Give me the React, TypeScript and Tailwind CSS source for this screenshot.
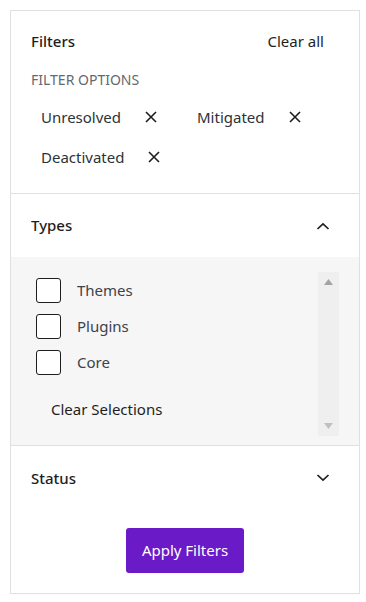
import { useState } from "react";

const font = { fontFamily: '"Noto Sans", "Open Sans", sans-serif' };

function XIcon() {
  return (
    <svg width="12" height="12" viewBox="0 0 12 12" className="shrink-0">
      <path d="M1 1L11 11M11 1L1 11" stroke="#1e1e1e" strokeWidth="1.6" fill="none" />
    </svg>
  );
}

function Chevron({ up }: { up: boolean }) {
  return (
    <svg width="14" height="8" viewBox="0 0 14 8">
      <path
        d={up ? "M1.5 7L7 1.8L12.5 7" : "M1.5 1L7 6.2L12.5 1"}
        stroke="#1e1e1e"
        strokeWidth="1.7"
        fill="none"
      />
    </svg>
  );
}

function Chip({ label, className = "" }: { label: string; className?: string }) {
  return (
    <div className={"flex items-center h-[40px] pl-[10px] " + className}>
      <span>{label}</span>
      <span className="ml-[24px]">
        <XIcon />
      </span>
    </div>
  );
}

export default function App() {
  const [types, setTypes] = useState({ Themes: false, Plugins: false, Core: false });

  return (
    <div className="min-h-screen bg-white pt-[10px] pl-[10px]" style={font}>
      <div className="w-[350px] h-[584px] border border-[#e0e0e0] flex flex-col text-[15px] text-[#2c3338]">
        {/* filters */}
        <div className="pt-[20px] pl-[20px] pr-[35px] pb-[16px] border-b border-[#e0e0e0]">
          <div className="flex justify-between items-center h-[20px]">
            <span className="font-medium text-[#1e1e1e]">Filters</span>
            <span className="text-[#1e1e1e]">Clear all</span>
          </div>
          <div className="mt-[18px] h-[20px] flex items-center text-[14px] text-[#646970]">FILTER OPTIONS</div>
          <div className="mt-[8px] flex flex-wrap">
            <Chip label="Unresolved" className="w-[156px]" />
            <Chip label="Mitigated" />
            <Chip label="Deactivated" className="w-[156px]" />
          </div>
        </div>

        {/* types */}
        <div className="h-[63px] flex items-center justify-between pl-[20px] pr-[29px]">
          <span className="font-medium text-[#1e1e1e]">Types</span>
          <Chevron up />
        </div>
        <div className="h-[189px] bg-[#f6f6f6] flex pt-[15px] pb-[9px] pr-[20px] border-b border-[#e0e0e0]">
          <div className="flex-1 pl-[25px]">
            {(Object.keys(types) as (keyof typeof types)[]).map((k) => (
              <label key={k} className="flex items-center h-[36px] cursor-pointer">
                <input
                  type="checkbox"
                  checked={types[k]}
                  onChange={() => setTypes({ ...types, [k]: !types[k] })}
                  className="appearance-none w-[25px] h-[25px] rounded-[3px] border-[1.5px] border-[#1e1e1e] bg-white"
                />
                <span className="ml-[16px] text-[#3c434a]">{k}</span>
              </label>
            ))}
            <div className="mt-[18px] pl-[15px] text-[#1e1e1e]">Clear Selections</div>
          </div>
          <div className="w-[21px] bg-[#efefef] flex flex-col justify-between items-center py-[7px]">
            <svg width="9" height="6" viewBox="0 0 9 6">
              <path d="M4.5 0L9 6H0Z" fill="#a3a3a3" />
            </svg>
            <svg width="9" height="6" viewBox="0 0 9 6">
              <path d="M0 0H9L4.5 6Z" fill="#c0c0c0" />
            </svg>
          </div>
        </div>

        {/* status */}
        <div className="h-[64px] flex items-center justify-between pl-[20px] pr-[29px]">
          <span className="font-medium text-[#1e1e1e]">Status</span>
          <Chevron up={false} />
        </div>
        <div className="flex justify-center pt-[18px]">
          <button className="w-[118px] h-[45px] rounded-[3px] bg-[#6b1ac7] text-white text-[15px]">
            Apply Filters
          </button>
        </div>
      </div>
    </div>
  );
}
